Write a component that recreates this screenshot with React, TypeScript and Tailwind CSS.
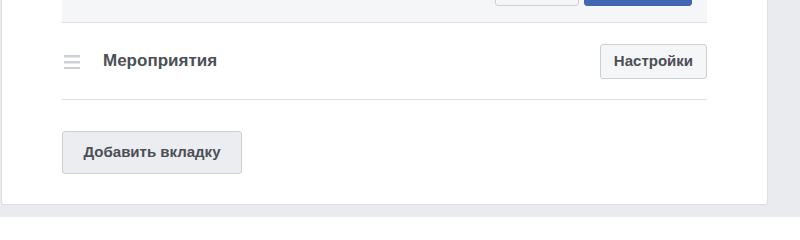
const DragHandle = () => (
  <svg width="16" height="16" viewBox="0 0 16 16" className="shrink-0">
    <rect x="0" y="2" width="16" height="2.5" fill="#ccd0d5" />
    <rect x="0" y="8" width="16" height="2.5" fill="#ccd0d5" />
    <rect x="0" y="14" width="16" height="2.5" fill="#ccd0d5" />
  </svg>
);

const App = () => {
  return (
    <div
      className="w-[800px] h-[217px] bg-[#e9ebee] overflow-hidden"
      style={{ fontFamily: '"Liberation Sans", Arial, sans-serif' }}
    >
      <div className="ml-px w-[767px] bg-white border-x border-b border-[#dddfe2] rounded-b-[3px] px-[60px] pb-[30px]">
        {/* bottom of the expanded tab editor */}
        <div className="h-[23px] bg-[#f5f6f7] border-b border-[#dddfe2] flex items-end justify-end gap-[5px] pr-[15px] pb-[16px]">
          <button className="h-[28px] w-[84px] shrink-0 bg-[#f5f6f7] border border-[#ccd0d5] rounded-[3px]" />
          <button className="h-[28px] w-[108px] shrink-0 bg-[#4267b2] border border-[#4267b2] rounded-[3px]" />
        </div>

        <div className="h-[77px] border-b border-[#dddfe2] flex items-center">
          <div className="pl-[2px] w-[41px] flex items-center">
            <DragHandle />
          </div>
          <div className="flex-1 text-[17px] font-bold text-[#4b4f56]">Мероприятия</div>
          <button className="h-[35px] px-[13px] bg-[#f5f6f7] border border-[#ccd0d5] rounded-[3px] text-[15px] font-bold text-[#4b4f56]">
            Настройки
          </button>
        </div>

        <div className="pt-[31px]">
          <button className="h-[43px] w-[180px] bg-[#ebedf0] border border-[#ccd0d5] rounded-[3px] text-[15px] font-bold text-[#4b4f56]">
            Добавить вкладку
          </button>
        </div>
      </div>
    </div>
  );
};

export default App;
